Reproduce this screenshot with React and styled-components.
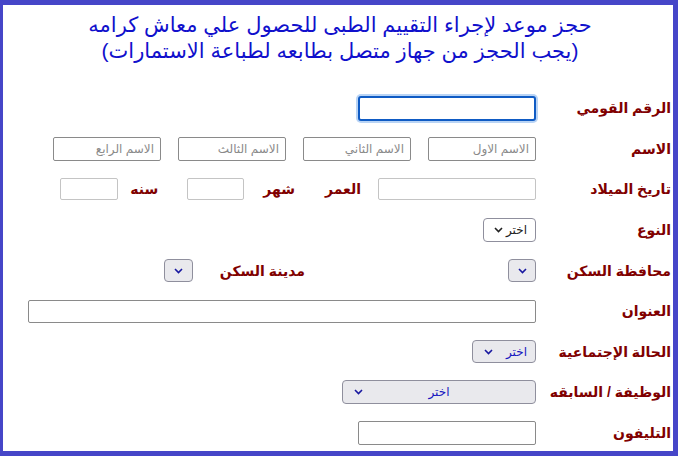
import React from 'react';
import styled, { createGlobalStyle } from 'styled-components';

const GlobalStyle = createGlobalStyle`
  html, body {
    margin: 0;
    padding: 0;
    background: #fff;
  }
  * { box-sizing: border-box; }
`;

const Frame = styled.div`
  width: 678px;
  height: 456px;
  border-style: solid;
  border-color: #4646c8;
  border-width: 5px 5px 5px 3px;
  background: #fff;
  direction: rtl;
  font-family: "Liberation Sans", "DejaVu Sans", Arial, sans-serif;
  overflow: hidden;
`;

const Title = styled.h1`
  margin: 0;
  padding-top: 7px;
  padding-left: 4px;
  font-size: 21px;
  font-weight: normal;
  line-height: 26px;
  color: #1010cc;
  text-align: center;
`;

const Form = styled.div`
  display: grid;
  grid-auto-rows: 40.6px;
  margin-top: 24px;
`;

const Row = styled.div`
  display: flex;
  align-items: center;
`;

const Label = styled.div`
  width: 137px;
  flex: none;
  padding-right: 2px;
  font-size: 14px;
  font-weight: bold;
  color: #800000;
  white-space: nowrap;
`;

const InlineLabel = styled.span`
  font-size: 14px;
  font-weight: bold;
  color: #800000;
  white-space: nowrap;
  margin-right: ${p => p.$mr || 0}px;
`;

const Field = styled.div`
  display: flex;
  align-items: center;
`;

const Input = styled.input`
  width: ${p => p.$w}px;
  height: ${p => p.$h || 24}px;
  margin-right: ${p => p.$mr || 0}px;
  border: 1px solid ${p => (p.$light ? '#c4c4c4' : '#8a8a8a')};
  border-radius: 2px;
  padding: 0 6px;
  font-family: "Liberation Sans", "DejaVu Sans", Arial, sans-serif;
  font-size: 12px;
  direction: rtl;
  background: #fff;
  outline: none;
  ${p => p.$focus && `
    border: 2px solid #0f5bc4;
    border-radius: 3px;
    box-shadow: 0 0 0 2px #b9d4f5;
  `}
  &::placeholder { color: #8a8a8a; }
`;

const SelectBox = styled.div`
  position: relative;
  width: ${p => p.$w}px;
  height: ${p => p.$h || 24}px;
  margin-right: ${p => p.$mr || 0}px;
  border: 1px solid #8f8f9d;
  border-radius: 4px;
  background: ${p => (p.$white ? '#fff' : '#e9e9ed')};
  color: ${p => (p.$blue ? '#1818c0' : '#222')};
  font-size: 12px;
  display: flex;
  align-items: center;
  justify-content: ${p => (p.$center ? 'center' : 'flex-start')};
  padding-right: ${p => (p.$center ? 0 : 8)}px;
`;

const Chevron = styled.svg`
  position: absolute;
  left: ${p => p.$left || 9}px;
  top: 50%;
  margin-top: -3px;
`;

const Select = ({ w, h, mr, text, white, blue, center, chevLeft }) => (
  <SelectBox $w={w} $h={h} $mr={mr} $white={white} $blue={blue} $center={center}>
    {text}
    <Chevron $left={chevLeft} width="9" height="6" viewBox="0 0 9 6">
      <path d="M1 1 L4.5 4.5 L8 1" fill="none" stroke={blue || !white ? '#1818a0' : '#222'} strokeWidth="1.6" />
    </Chevron>
  </SelectBox>
);

export default function App() {
  return (
    <>
      <GlobalStyle />
      <Frame>
        <Title>
          حجز موعد لإجراء التقييم الطبى للحصول علي معاش كرامه
          <br />
          (يجب الحجز من جهاز متصل بطابعه لطباعة الاستمارات)
        </Title>
        <Form>
          <Row>
            <Label>الرقم القومي</Label>
            <Input $w={178} $h={25} $focus />
          </Row>
          <Row>
            <Label>الاسم</Label>
            <Field>
              <Input $w={108} placeholder="الاسم الاول" />
              <Input $w={108} $mr={17} placeholder="الاسم الثاني" />
              <Input $w={108} $mr={17} placeholder="الاسم الثالث" />
              <Input $w={108} $mr={17} placeholder="الاسم الرابع" />
            </Field>
          </Row>
          <Row>
            <Label>تاريخ الميلاد</Label>
            <Field>
              <Input $w={158} $h={22} $light />
              <InlineLabel $mr={17}>العمر</InlineLabel>
              <InlineLabel $mr={30}>شهر</InlineLabel>
              <Input $w={57} $h={22} $light $mr={19} />
              <InlineLabel $mr={29}>سنه</InlineLabel>
              <Input $w={58} $h={22} $light $mr={12} />
            </Field>
          </Row>
          <Row>
            <Label>النوع</Label>
            <Select w={53} text="اختر" white chevLeft={10} />
          </Row>
          <Row>
            <Label>محافظة السكن</Label>
            <Field>
              <Select w={28} h={23} chevLeft={9} />
              <InlineLabel $mr={203}>مدينة السكن</InlineLabel>
              <Select w={29} h={23} mr={27} chevLeft={9} />
            </Field>
          </Row>
          <Row>
            <Label>العنوان</Label>
            <Input $w={508} $h={23} />
          </Row>
          <Row>
            <Label>الحالة الإجتماعية</Label>
            <Select w={64} h={23} text="اختر" blue chevLeft={11} />
          </Row>
          <Row>
            <Label>الوظيفة / السابقه</Label>
            <Select w={194} h={24} text="اختر" blue center chevLeft={11} />
          </Row>
          <Row>
            <Label>التليفون</Label>
            <Input $w={178} $h={24} />
          </Row>
        </Form>
      </Frame>
    </>
  );
}
